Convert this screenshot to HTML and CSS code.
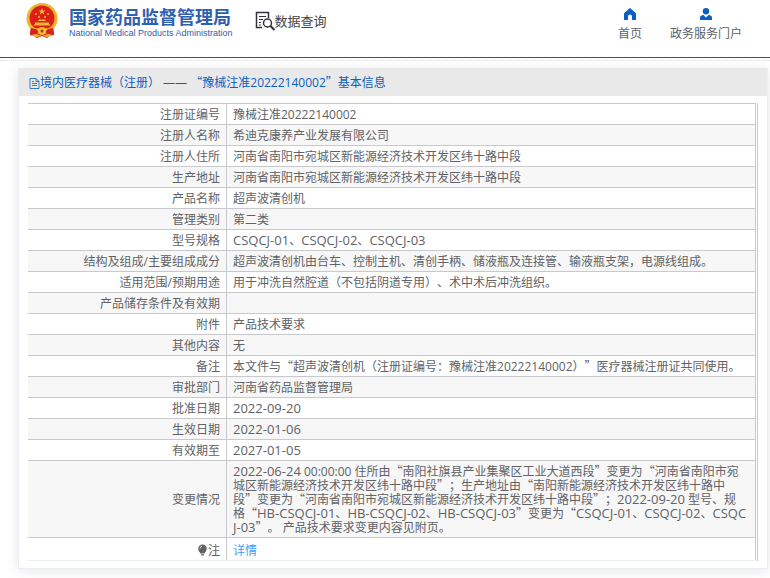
FILE: index.html
```html
<!DOCTYPE html>
<html lang="zh-CN">

<head>
    <meta charset="UTF-8">
    <meta name="viewport" content="width=device-width, initial-scale=1">
    <title>数据查询 - 国家药品监督管理局</title>
    <link rel="stylesheet" href="styles.css">
</head>

<body>

    <header class="top">
        <a class="logo" href="#">
            <svg class="emblem" viewBox="0 0 32 35" aria-hidden="true">
                <path d="M5 24l-1 8 4 1 3 2 5-2 5 2 3-2 4-1-1-8z" fill="#d8201c" />
                <circle cx="16" cy="15.500" r="15.500" fill="#edb72c" />
                <circle cx="16" cy="15" r="12.500" fill="#de1f19" />
                <path d="M16 5l1 2.500h2.600l-2.100 1.600.8 2.500-2.300-1.500-2.300 1.500.8-2.500-2.100-1.600H15z" fill="#f2b53a" />
                <g fill="#f2b53a">
                    <circle cx="10" cy="11" r="1" />
                    <circle cx="22" cy="11" r="1" />
                    <circle cx="13" cy="14" r="1" />
                    <circle cx="19" cy="14" r="1" />
                    <path d="M12 18l1-1.500h6l1 1.500zM9 21v-1.500h14V21l2 1.500H7z" />
                </g>
                <path d="M4 24q12 3 24 0l-2 4q-10-3-20 0z" fill="#f0bf35" />
                <path d="M5 25l5 1 3 3-5 3-4-1zM27 25l-5 1-3 3 5 3 4-1z" fill="#d8201c" />
                <circle cx="16" cy="28" r="4" fill="#f0bf35" />
                <circle cx="16" cy="28" r="1.500" fill="#d8201c" />
                <path d="M5 32l5-1 6 2 6-2 5 1-5 2-6-1-6 1z" fill="#edb72c" />
            </svg>
            <span class="logo-text">
                <span class="logo-cn">国家药品监督管理局</span>
                <span class="logo-en">National Medical Products Administration</span>
            </span>
        </a>

        <a class="search-title" href="#">
            <svg class="search-icon" viewBox="0 0 20 20" fill="none" stroke="#33333f" aria-hidden="true">
                <path d="M7 16.500H1.500v-15h12V7" stroke-width="1.500" />
                <path d="M4 5.500h7M4 8.500h4M4 11.500h2M4 14h2" />
                <circle cx="12.500" cy="12" r="4" stroke-width="1.500" />
                <path d="M15.500 15l4 4" stroke-width="2.200" />
            </svg>
            数据查询
        </a>

        <nav class="menu">
            <a href="#">
                <svg viewBox="0 0 12 12" aria-hidden="true">
                    <path d="M6 0L0 5.200V12h4V8.500a2 2 0 0 1 4 0V12h4V5.200z" fill="#0a5fc0" />
                </svg>
                首页
            </a>
            <a href="#">
                <svg viewBox="0 0 12 12" aria-hidden="true">
                    <circle cx="6" cy="3.200" r="3.200" fill="#0a5fc0" />
                    <path d="M0 12V9.500Q0 7.500 3.500 7L6 9.500 8.500 7Q12 7.500 12 9.500V12z" fill="#0a5fc0" />
                </svg>
                政务服务门户
            </a>
        </nav>
    </header>

    <main class="card">
        <h1 class="card-title">
            <svg class="doc-icon" viewBox="0 0 10 12" fill="none" stroke="#0a5fc0" aria-hidden="true">
                <path d="M.5 1.500h6l3 3v7h-9zM6.500 1.500v3h3M2.500 4.500h2M2.500 6.500h5M2.500 8.500h5" stroke-width=".8" />
            </svg>境内医疗器械（注册） —— <span class="q">“</span>豫械注准20222140002<span class="q">”</span>基本信息
        </h1>

        <div class="table-wrap">
            <table class="info">
                <tr><th scope="row">注册证编号</th><td>豫械注准20222140002</td></tr>
                <tr><th scope="row">注册人名称</th><td>希迪克康养产业发展有限公司</td></tr>
                <tr><th scope="row">注册人住所</th><td>河南省南阳市宛城区新能源经济技术开发区纬十路中段</td></tr>
                <tr><th scope="row">生产地址</th><td>河南省南阳市宛城区新能源经济技术开发区纬十路中段</td></tr>
                <tr><th scope="row">产品名称</th><td>超声波清创机</td></tr>
                <tr><th scope="row">管理类别</th><td>第二类</td></tr>
                <tr><th scope="row">型号规格</th><td><span class="code">CSQCJ-01</span>、<span class="code">CSQCJ-02</span>、<span class="code">CSQCJ-03</span></td></tr>
                <tr><th scope="row">结构及组成/主要组成成分</th><td>超声波清创机由台车、控制主机、清创手柄、储液瓶及连接管、输液瓶支架，电源线组成。</td></tr>
                <tr><th scope="row">适用范围/预期用途</th><td>用于冲洗自然腔道（不包括阴道专用）、术中术后冲洗组织。</td></tr>
                <tr><th scope="row">产品储存条件及有效期</th><td></td></tr>
                <tr><th scope="row">附件</th><td>产品技术要求</td></tr>
                <tr><th scope="row">其他内容</th><td>无</td></tr>
                <tr><th scope="row">备注</th><td>本文件与<span class="q">“</span>超声波清创机（注册证编号：豫械注准20222140002）<span class="q">”</span>医疗器械注册证共同使用。</td></tr>
                <tr><th scope="row">审批部门</th><td>河南省药品监督管理局</td></tr>
                <tr><th scope="row">批准日期</th><td><time class="code">2022-09-20</time></td></tr>
                <tr><th scope="row">生效日期</th><td><time class="code">2022-01-06</time></td></tr>
                <tr><th scope="row">有效期至</th><td><time class="code">2027-01-05</time></td></tr>
                <tr>
                    <th scope="row">变更情况</th>
                    <td><time class="code">2022-06-24</time> 00:00:00 住所由<span class="q">“</span>南阳社旗县产业集聚区工业大道西段<span class="q">”</span>变更为<span class="q">“</span>河南省南阳市宛<br>城区新能源经济技术开发区纬十路中段<span class="q">”</span>；生产地址由<span class="q">“</span>南阳新能源经济技术开发区纬十路中<br>段<span class="q">”</span>变更为<span class="q">“</span>河南省南阳市宛城区新能源经济技术开发区纬十路中段<span class="q">”</span>；<time class="code">2022-09-20</time> 型号、规<br>格<span class="q">“</span><span class="code">HB-CSQCJ-01</span>、<span class="code">HB-CSQCJ-02</span>、<span class="code">HB-CSQCJ-03</span><span class="q">”</span>变更为<span class="q">“</span><span class="code">CSQCJ-01</span>、<span class="code">CSQCJ-02</span>、<span class="code">CSQC<br>J-03</span><span class="q">”</span>。 产品技术要求变更内容见附页。</td>
                </tr>
                <tr class="note">
                    <th scope="row">
                        <svg class="bulb" viewBox="0 0 10 12" aria-hidden="true">
                            <path d="M5 .5a4.200 4.200 0 0 1 4.200 4.200C9.200 7 7.500 8 7 9.500H3C2.500 8 .8 7 .8 4.700A4.200 4.200 0 0 1 5 .5zM3.500 10.300h3V11L5 11.800 3.500 11z" fill="#606266" />
                            <path d="M2.500 4.500Q2.700 2.500 4.500 2.200" fill="none" stroke="#fff" stroke-width=".8" />
                        </svg>注
                    </th>
                    <td><a href="#">详情</a></td>
                </tr>
            </table>
        </div>
    </main>

</body>

</html>
```
FILE: styles.css
```css
* {
    box-sizing: border-box;
}

body {
    margin: 0;
    font-family: "Open Sans", "Noto Sans CJK SC", sans-serif;
    font-size: 12px;
    line-height: 14px;
    text-spacing-trim: space-all;
    color: #606266;
    background-color: #fff;
}

a {
    color: inherit;
    text-decoration: none;
}

svg {
    flex: none;
}

/* fullwidth quotes */
.q {
    font-family: "Noto Sans CJK SC", sans-serif;
    line-height: 0;
}

/* model numbers and dates */
.code {
    font-size: 13px;
    line-height: 0;
}

/* header */
.top {
    display: flex;
    align-items: flex-start;
    height: 58px;
    padding: 3px 28px 0 26px;
    border-bottom: 1px solid #0a5ba8;
}

.logo {
    display: flex;
    gap: 11px;
    color: #2f60b0;
}

.emblem {
    width: 32px;
    height: 35px;
}

.logo-text {
    display: flex;
    flex-direction: column;
    padding-top: 2px;
}

.logo-cn {
    font-family: "Noto Sans CJK SC", sans-serif;
    font-size: 18px;
    font-weight: bold;
    line-height: 22px;
}

.logo-en {
    font-family: "Liberation Sans", sans-serif;
    font-size: 9px;
    line-height: 12px;
}

.search-title {
    display: flex;
    align-items: center;
    margin: 8px 0 0 22px;
    font-size: 13px;
    line-height: 20px;
    color: #444;
}

.search-icon {
    width: 20px;
    height: 20px;
}

.menu {
    display: flex;
    gap: 28px;
    margin-left: auto;
    padding-top: 5px;
}

.menu a {
    display: flex;
    flex-direction: column;
    align-items: center;
    gap: 7px;
}

.menu svg {
    width: 12px;
    height: 12px;
}

/* dotted strip under the header line */
.top::after {
    content: "";
    position: absolute;
    top: 60px;
    left: 0;
    right: 0;
    border-top: 1px dotted #dcdcdc;
}

/* card */
.card {
    margin: 10px 2px 10px 18px;
    padding-bottom: 7px;
    border: 1px solid #ebeef5;
    border-top: 0;
    box-shadow: 0 2px 12px rgba(0, 0, 0, 0.1);
}

.card-title {
    margin: 0;
    padding: 8px 10px 6px;
    font-size: 12px;
    font-weight: normal;
    color: #0a5fc0;
    background-color: #e9e9e9;
}

.doc-icon {
    width: 11px;
    height: 12px;
    vertical-align: -2px;
}

.table-wrap {
    margin: 7px 9px 0;
    border-right: 3px double #c8c9cc;
    border-bottom: 1px solid #ebeef5;
}

.info {
    width: 100%;
    border-spacing: 0;
}

.info th,
.info td {
    padding: 4px 6px 2px;
    border-top: 1px solid #c8c9cc;
}

.info th {
    width: 199px;
    font-weight: normal;
    text-align: right;
    border-right: 1px solid #c8c9cc;
}

.info tr:nth-child(even) {
    background-color: #f7f7f7;
}

.info .note th,
.info .note td {
    padding: 6px 6px 2px;
}

.note a {
    color: #409eff;
}

.bulb {
    width: 11px;
    height: 12px;
    vertical-align: -1px;
}
```
